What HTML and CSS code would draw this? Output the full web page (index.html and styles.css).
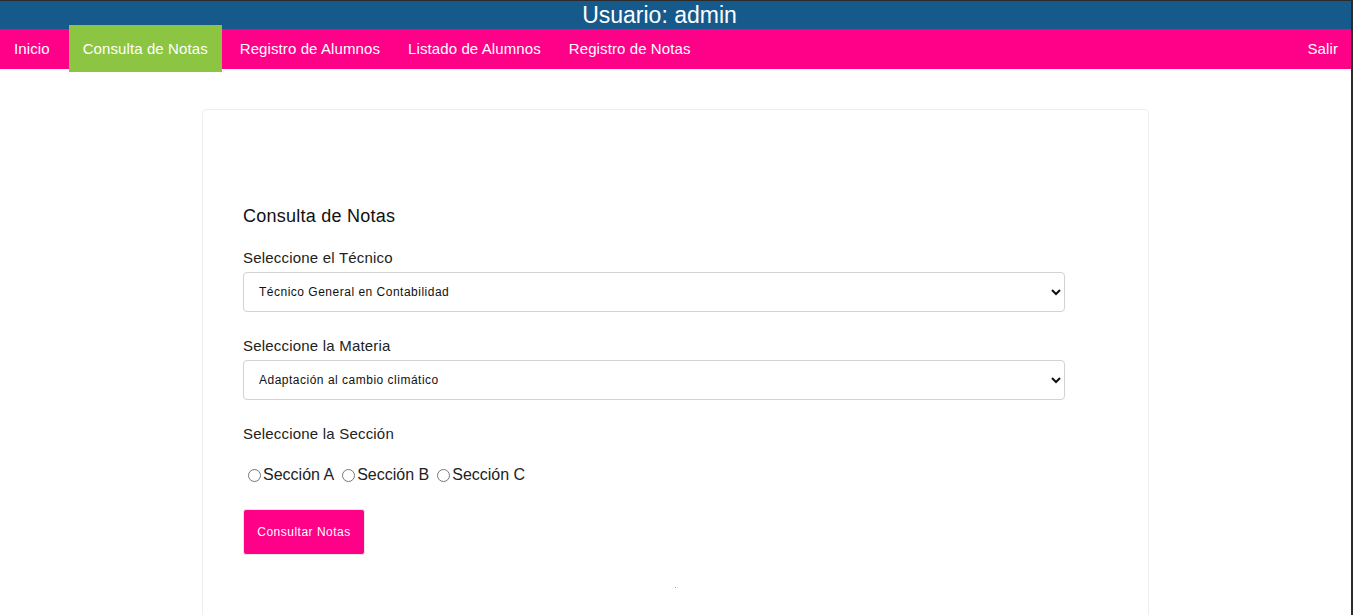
FILE: index.html
```html
<!DOCTYPE html>
<html lang="es">
<head>
<meta charset="utf-8">
<title>Consulta de Notas</title>
<link rel="stylesheet" href="styles.css">
</head>
<body>
<div class="frame">
  <header class="topbar">Usuario: admin</header>
  <nav class="nav">
    <a class="nav-item" href="#">Inicio</a>
    <a class="nav-item active" href="#">Consulta de Notas</a>
    <a class="nav-item" href="#">Registro de Alumnos</a>
    <a class="nav-item" href="#">Listado de Alumnos</a>
    <a class="nav-item" href="#">Registro de Notas</a>
    <a class="nav-item exit" href="#">Salir</a>
  </nav>
  <main class="main">
    <section class="card">
      <h2 class="title">Consulta de Notas</h2>
      <label class="label">Seleccione el Técnico</label>
      <div class="select-wrap">
        <select class="select">
          <option>Técnico General en Contabilidad</option>
        </select>
      </div>
      <label class="label">Seleccione la Materia</label>
      <div class="select-wrap">
        <select class="select">
          <option>Adaptación al cambio climático</option>
        </select>
      </div>
      <label class="label">Seleccione la Sección</label>
      <div class="radios">
        <label class="radio"><input type="radio" name="sec">Sección A</label>
        <label class="radio"><input type="radio" name="sec">Sección B</label>
        <label class="radio"><input type="radio" name="sec">Sección C</label>
      </div>
      <button class="btn" type="button">Consultar Notas</button>
      <div class="dot-row"><span class="dot"></span></div>
    </section>
  </main>
</div>
</body>
</html>
```

FILE: styles.css
```css
html, body {
  margin: 0;
  padding: 0;
  background: #ffffff;
  font-family: "Liberation Sans", Arial, sans-serif;
}

.frame {
  border-top: 1px solid #2b2b2b;
  border-right: 2px solid #2b2b2b;
  height: 615px;
  box-sizing: border-box;
  overflow: hidden;
}

.topbar {
  background: #155a8b;
  color: #ffffff;
  height: 28px;
  line-height: 28px;
  font-size: 23px;
  text-align: center;
  padding-right: 32px;
}

.nav {
  background: #ff0088;
  height: 40px;
  display: flex;
  align-items: center;
  padding: 0 13px 0 0;
}

.nav-item {
  color: #ffffff;
  text-decoration: none;
  font-size: 15px;
  letter-spacing: 0.1px;
  padding: 0 14px;
  line-height: 40px;
}

.nav-item.active {
  background: #8bc541;
  height: 47px;
  line-height: 47px;
  margin-top: -8px;
  margin-bottom: -7px;
  margin-left: 5px;
  margin-right: 4px;
}

.nav-item.exit {
  margin-left: auto;
  padding-right: 0;
}

.main {
  display: flex;
  justify-content: center;
  padding-top: 40px;
}

.card {
  width: 947px;
  box-sizing: border-box;
  border: 1px solid #eeeeee;
  border-radius: 4px;
  padding: 96px 40px 40px;
  min-height: 540px;
}

.title {
  font-size: 18px;
  font-weight: normal;
  letter-spacing: 0.25px;
  color: #111;
  margin: 0 0 22px;
}

.label {
  display: block;
  font-size: 15px;
  letter-spacing: 0.2px;
  color: #222;
  margin-bottom: 6px;
}

.select-wrap {
  width: 822px;
  margin-bottom: 25px;
}

.select {
  width: 100%;
  height: 40px;
  border: 1px solid #d2d2d2;
  border-radius: 4px;
  background: #fff;
  font-family: "Liberation Sans", Arial, sans-serif;
  font-size: 12px;
  letter-spacing: 0.5px;
  color: #111;
  padding: 0 11px;
}

.radios {
  display: flex;
  margin-top: 24px;
  margin-bottom: 25px;
  font-size: 16px;
  color: #222;
}

.radio {
  display: flex;
  align-items: center;
  margin-right: 3px;
}

.radio input {
  margin: 0 2px 0 5px;
  width: 13px;
  height: 13px;
}

.btn {
  background: #ff0088;
  color: #fff;
  border: 1px solid #e6e6e6;
  border-radius: 3px;
  font-family: "Liberation Sans", Arial, sans-serif;
  font-size: 12px;
  letter-spacing: 0.5px;
  width: 122px;
  height: 46px;
  padding: 0;
}

.dot-row {
  display: flex;
  justify-content: center;
  margin-top: 32px;
}

.dot {
  width: 1px;
  height: 1px;
  background: #999;
}
```
